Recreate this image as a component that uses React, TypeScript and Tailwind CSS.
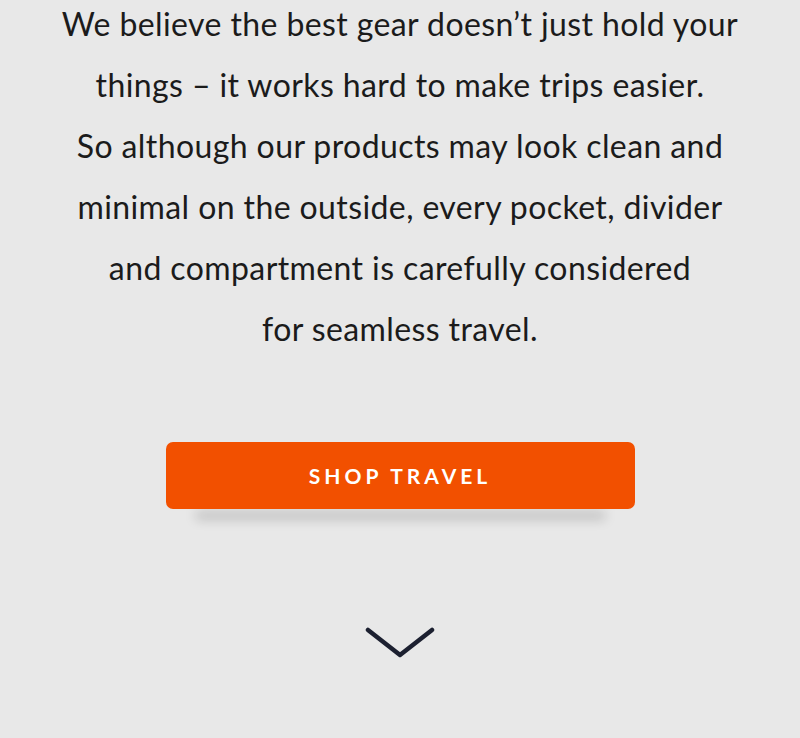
export default function App() {
  const lines = [
    "We believe the best gear doesn\u2019t just hold your",
    "things \u2013 it works hard to make trips easier.",
    "So although our products may look clean and",
    "minimal on the outside, every pocket, divider",
    "and compartment is carefully considered",
    "for seamless travel.",
  ];

  return (
    <div className="min-h-[738px] w-full overflow-hidden bg-[#e8e8e8] font-['Lato',sans-serif]">
      <div className="flex flex-col items-center">
        {/* Intro copy */}
        <p className="-mt-[7px] whitespace-nowrap text-center text-[32px] leading-[61px] tracking-[0.4px] text-[#1b1b1b]">
          {lines.map((line, i) => (
            <span key={i} className="block">
              {line}
            </span>
          ))}
        </p>

        {/* CTA */}
        <a
          href="#"
          className="mt-[83px] flex h-[67px] w-[469px] items-center justify-center rounded-[7px] bg-[#f25000] text-[21px] font-bold uppercase tracking-[0.19em] text-white shadow-[0_40px_12px_-30px_rgba(0,0,0,0.22)]"
        >
          Shop Travel
        </a>

        {/* Scroll hint */}
        <svg
          className="mt-[117px]"
          width="70"
          height="34"
          viewBox="0 0 70 34"
          fill="none"
          stroke="#1c2030"
          strokeWidth="4.5"
          strokeLinecap="round"
          strokeLinejoin="round"
        >
          <path d="M3 4 L35 29 L67 4" />
        </svg>
      </div>
    </div>
  );
}
